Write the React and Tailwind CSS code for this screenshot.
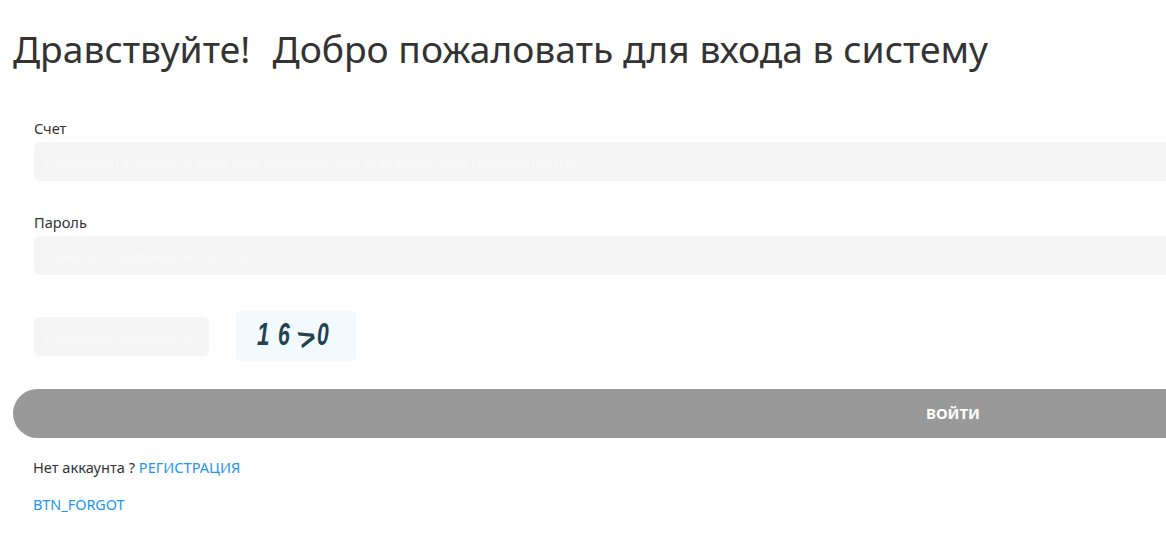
import React from 'react';

export default function App() {
  return (
    <div className="w-[1166px] h-[534px] overflow-hidden bg-white font-['Noto_Sans',sans-serif] text-[#333]">
      <div className="w-[1893px] pl-[13px] pt-[23px]">
        <h1 className="text-[37.2px] leading-[52px] font-normal whitespace-pre tracking-[0.01px]">
          <span className="mr-[3px]">Дравствуйте!  </span>Добро пожаловать для входа в систему
        </h1>

        <form className="mt-[43px]">
          {/* Account */}
          <div className="pl-[21px]">
            <label className="block text-[14.6px] leading-[20px] mb-[4px]">Счет</label>
            <input
              type="text"
              placeholder="Пожалуйста, введите свое имя пользователя или адрес электронной почты"
              className="block w-full h-[39px] px-[11px] rounded-[6px] bg-[#f5f5f5] text-[14.4px] outline-none placeholder:text-[#f9f9f9]"
            />
          </div>

          {/* Password */}
          <div className="pl-[21px] mt-[31px]">
            <label className="block text-[14.6px] leading-[20px] mb-[4px]">Пароль</label>
            <input
              type="password"
              placeholder="Пожалуйста, введите пароль"
              className="block w-full h-[39px] px-[11px] rounded-[6px] bg-[#f5f5f5] text-[14.4px] outline-none placeholder:text-[#f9f9f9]"
            />
          </div>

          {/* Captcha */}
          <div className="flex items-center pl-[21px] mt-[36px] gap-[27px]">
            <input
              type="text"
              placeholder="Пожалуйста, введите проверочный код"
              className="block w-[175px] h-[39px] px-[11px] rounded-[6px] bg-[#f5f5f5] text-[14.4px] outline-none placeholder:text-[#f9f9f9]"
            />
            <div className="w-[120px] h-[50px] bg-[#f2fafe] flex items-center pl-[21px] text-[#23424d] font-['Liberation_Sans',sans-serif] font-bold italic text-[31px] leading-none pb-[4px]">
              <span className="inline-block w-[21px] scale-x-[0.72] origin-left">1</span>
              <span className="inline-block w-[20px] scale-x-[0.68] origin-left">6</span>
              <span className="inline-block w-[19px] scale-x-[0.95] rotate-[-16deg] origin-left translate-y-[6px]">&gt;</span>
              <span className="inline-block scale-x-[0.68] origin-left">0</span>
            </div>
          </div>

          <button
            type="button"
            className="block w-full h-[49px] mt-[28px] rounded-full bg-[#999] text-white text-[15px] font-bold"
          >
            ВОЙТИ
          </button>
        </form>

        <div className="pl-[20px] mt-[19px] text-[14.6px] leading-[20px]">
          Нет аккаунта ? <a className="text-[#2196f3]">РЕГИСТРАЦИЯ</a>
        </div>
        <div className="pl-[20px] mt-[18px] text-[14.4px] leading-[20px]">
          <a className="text-[#2196f3]">BTN_FORGOT</a>
        </div>
      </div>
    </div>
  );
}
